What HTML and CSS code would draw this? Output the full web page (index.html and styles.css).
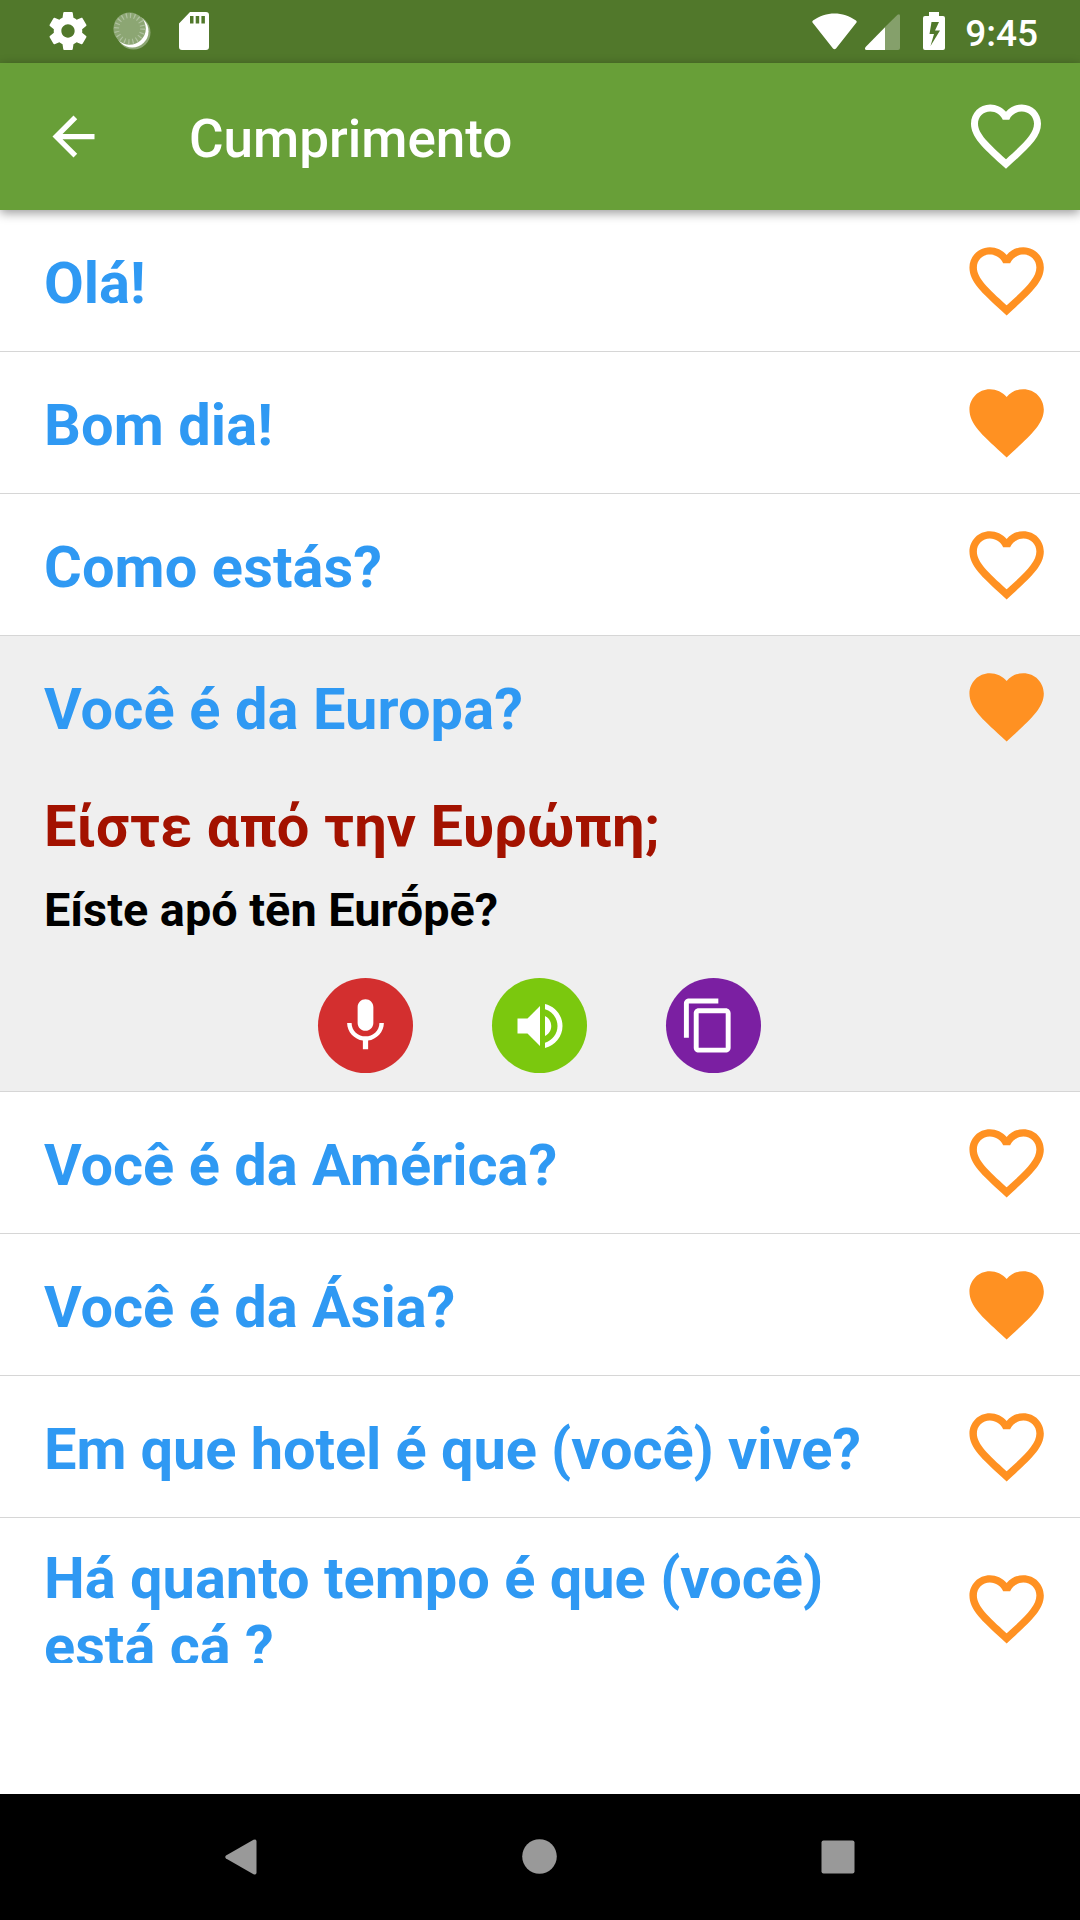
FILE: index.html
```html
<!DOCTYPE html>
<html lang="pt">
<head>
<meta charset="utf-8">
<title>Cumprimento</title>
<link rel="stylesheet" href="styles.css">
</head>
<body>
<svg class="defs" width="0" height="0">
  <symbol id="heart" viewBox="0 0 24 24"><path d="M12 21.35l-1.45-1.32C5.4 15.36 2 12.28 2 8.5 2 5.42 4.42 3 7.5 3c1.74 0 3.41.81 4.5 2.09C13.09 3.81 14.76 3 16.5 3 19.58 3 22 5.42 22 8.5c0 3.78-3.4 6.86-8.55 11.54L12 21.35z"/></symbol>
  <symbol id="heart-line" viewBox="0 0 24 24"><path d="M16.5 3c-1.74 0-3.41.81-4.5 2.09C10.91 3.81 9.24 3 7.5 3 4.42 3 2 5.42 2 8.5c0 3.78 3.4 6.86 8.55 11.54L12 21.35l1.45-1.32C18.6 15.36 22 12.28 22 8.5 22 5.42 19.58 3 16.5 3zM12.1 18.55l-.1.1-.1-.1C7.14 14.24 4 11.39 4 8.5 4 6.5 5.5 5 7.5 5c1.54 0 3.04.99 3.57 2.36h1.87C13.46 5.99 14.96 5 16.5 5c2 0 3.5 1.5 3.5 3.5 0 2.89-3.14 5.74-7.9 10.05z"/></symbol>
</svg>
<div class="screen">
  <div class="status">
    <div class="notifications">
      <svg width="38" height="38" viewBox="2.2 2 19.6 20"><path d="M19.43 12.98c.04-.32.07-.64.07-.98s-.03-.66-.07-.98l2.11-1.65c.19-.15.24-.42.12-.64l-2-3.46c-.12-.22-.39-.3-.61-.22l-2.49 1c-.52-.4-1.08-.73-1.69-.98l-.38-2.65C14.46 2.18 14.25 2 14 2h-4c-.25 0-.46.18-.49.42l-.38 2.65c-.61.25-1.17.59-1.69.98l-2.49-1c-.23-.09-.49 0-.61.22l-2 3.46c-.13.22-.07.49.12.64l2.11 1.65c-.04.32-.07.65-.07.98s.03.66.07.98l-2.11 1.65c-.19.15-.24.42-.12.64l2 3.46c.12.22.39.3.61.22l2.49-1c.52.4 1.08.73 1.69.98l.38 2.65c.03.24.24.42.49.42h4c.25 0 .46-.18.49-.42l.38-2.65c.61-.25 1.17-.59 1.69-.98l2.49 1c.23.09.49 0 .61-.22l2-3.46c.12-.22.07-.49-.12-.64l-2.11-1.65zM12 15.5c-1.93 0-3.5-1.57-3.5-3.5s1.57-3.5 3.5-3.5 3.5 1.57 3.5 3.5-1.57 3.5-3.5 3.5z"/></svg>
      <svg class="spinner" width="38" height="38" viewBox="0 0 38 38">
        <circle class="halo" cx="20.5" cy="20.5" r="17"/>
        <circle class="crescent" cx="19.2" cy="19.2" r="16.3"/>
        <circle class="disc" cx="16.6" cy="16.6" r="16.2"/>
        <circle class="ticks" cx="16.6" cy="16.6" r="13"/>
      </svg>
      <svg width="30" height="38" viewBox="0 0 30 38"><path fill-rule="evenodd" d="M11 0H27a3 3 0 0 1 3 3V35a3 3 0 0 1-3 3H3a3 3 0 0 1-3-3V11.5ZM11 4v7.5h3.5V4ZM16.700 4v7.500h3.500V4ZM22.400 4v7.500h3.500V4Z"/></svg>
    </div>
    <div class="system">
      <svg width="45" height="37" viewBox="0 0 45 37"><path d="M.7 9.800Q-.3 8.600 1 7.500C14-2 31-2 44 7.500Q45.300 8.600 44.300 9.800L24 35.500Q22.500 37 21 35.500Z"/></svg>
      <svg class="signal" width="35" height="36" viewBox="0 0 35 36"><path class="dim" d="M20 13 32.500.8Q35-.8 35 2V34Q35 36 33 36H20Z"/><path d="M20 13.200V36H1.500Q-1 35.500.6 33Z"/></svg>
      <svg class="battery" width="22" height="38" viewBox="0 0 22 38"><path fill-rule="evenodd" d="M6 0H16V4H20Q22 4 22 6V36Q22 38 20 38H2Q0 38 0 36V6Q0 4 2 4H6ZM8.500 10 6.500 22H11L7.500 34 17 18.500H12L16 10Z"/></svg>
      <span class="clock">9:45</span>
    </div>
  </div>
  <header class="appbar">
    <svg width="63" height="63" viewBox="0 0 24 24"><path d="M20 11H7.830l5.590-5.590L12 4l-8 8 8 8 1.410-1.410L7.830 13H20v-2z"/></svg>
    <h1>Cumprimento</h1>
    <svg class="fav" width="84" height="84"><use href="#heart-line"/></svg>
  </header>
  <main class="phrases">
    <div class="row"><span class="phrase">Olá!</span><svg class="heart"><use href="#heart-line"/></svg></div>
    <div class="row"><span class="phrase wide">Bom dia!</span><svg class="heart"><use href="#heart"/></svg></div>
    <div class="row"><span class="phrase wide">Como estás?</span><svg class="heart"><use href="#heart-line"/></svg></div>
    <section class="open">
      <div class="row"><span class="phrase wide">Você é da Europa?</span><svg class="heart"><use href="#heart"/></svg></div>
      <p class="translation wide">Είστε από την Ευρώπη;</p>
      <p class="romanized">Eíste apó tēn Eurṓpē?</p>
      <div class="actions">
        <span class="action mic"><svg width="63" height="63" viewBox="0 0 24 24"><path d="M12 14c1.660 0 2.990-1.340 2.990-3L15 5c0-1.660-1.340-3-3-3S9 3.340 9 5v6c0 1.660 1.340 3 3 3zm5.300-3c0 3-2.540 5.100-5.300 5.100S6.700 14 6.700 11H5c0 3.410 2.720 6.230 6 6.720V21h2v-3.280c3.280-.480 6-3.300 6-6.720h-1.700z"/></svg></span>
        <span class="action sound"><svg width="60" height="60" viewBox="0 0 24 24"><path d="M3 9v6h4l5 5V4L7 9H3zm13.500 3c0-1.770-1.020-3.290-2.500-4.030v8.050c1.480-.730 2.500-2.250 2.500-4.020zM14 3.230v2.060c2.890.860 5 3.540 5 6.710s-2.110 5.850-5 6.710v2.060c4.010-.910 7-4.490 7-8.770s-2.990-7.860-7-8.770z"/></svg></span>
        <span class="action copy"><svg width="59" height="59" viewBox="0 0 24 24"><path d="M16 1H4c-1.100 0-2 .900-2 2v14h2V3h12V1zm3 4H8c-1.100 0-2 .900-2 2v14c0 1.100.900 2 2 2h11c1.100 0 2-.900 2-2V7c0-1.100-.900-2-2-2zm0 16H8V7h11v14z"/></svg></span>
      </div>
    </section>
    <div class="row"><span class="phrase">Você é da América?</span><svg class="heart"><use href="#heart-line"/></svg></div>
    <div class="row"><span class="phrase">Você é da Ásia?</span><svg class="heart"><use href="#heart"/></svg></div>
    <div class="row"><span class="phrase snug">Em que hotel é que (você) vive?</span><svg class="heart"><use href="#heart-line"/></svg></div>
    <div class="row tall"><span class="phrase">Há quanto tempo é que (você) está cá ?</span><svg class="heart"><use href="#heart-line"/></svg></div>
  </main>
  <nav class="navbar">
    <svg width="32" height="36" viewBox="0 0 32 36"><path d="M1 16.500 28.500.8Q31.500-.5 31.500 2.500V33.500Q31.500 36.500 28.500 35.200L1 19.500Q-.5 18 1 16.500Z"/></svg>
    <svg width="35" height="35" viewBox="0 0 35 35"><circle cx="17.500" cy="17.500" r="17.300"/></svg>
    <svg width="34" height="34" viewBox="0 0 34 34"><rect x=".500" y=".500" width="33" height="33" rx="2"/></svg>
  </nav>
</div>
</body>
</html>
```
FILE: styles.css
```css
* { box-sizing: border-box; }

body {
  margin: 0;
  background: #fff;
  font-family: Roboto, "Noto Sans", sans-serif;
}

svg { display: block; flex: none; }
.defs { position: absolute; }

.screen {
  display: flex;
  flex-direction: column;
  width: 1080px;
  height: 1920px;
  overflow: hidden;
}

.status {
  display: flex;
  flex: none;
  justify-content: space-between;
  height: 63px;
  padding: 0 42px 0 49px;
  background: #51782b;
  color: #fff;
  fill: #fff;
}

.notifications {
  display: flex;
  gap: 29px;
  padding-top: 12px;
}
.notifications svg:first-child { margin-right: -3px; }
.spinner { margin-right: -1px; }
.spinner .halo { opacity: .35; }
.spinner .disc { fill: #8ca673; }
.spinner .ticks {
  fill: none;
  stroke: #b0c2a0;
  stroke-width: 5;
  stroke-dasharray: 1.200 2.884;
}

.system {
  display: flex;
  align-items: flex-start;
  padding-top: 13px;
}
.signal { margin: 1px 0 0 8px; }
.signal .dim { opacity: .3; }
.battery { margin: -1px 0 0 23px; }
.clock {
  margin: -1px 0 0 20px;
  font-size: 37px;
  font-weight: 500;
  line-height: 44px;
}

.appbar {
  display: flex;
  flex: none;
  align-items: center;
  height: 147px;
  padding: 0 32px 0 42px;
  background: #689f38;
  color: #fff;
  fill: #fff;
  box-shadow: 0 3px 10px rgba(0, 0, 0, .4);
  z-index: 1;
}
.appbar h1 {
  flex: 1;
  margin: 4px 0 0 84px;
  font-size: 53px;
  font-weight: 500;
  line-height: 62px;
}
.fav { margin-top: -2px; }

.phrases {
  flex: none;
  height: 1453px;
  overflow: hidden;
}

.row {
  display: flex;
  align-items: center;
  justify-content: space-between;
  height: 142px;
  padding: 0 29px 0 44px;
  border-bottom: 1px solid #d6d6d6;
}
.row.tall { height: 182px; }

.phrase {
  width: 860px;
  padding-top: 4px;
  color: #2f99f3;
  font-size: 57.750px;
  font-weight: 700;
  line-height: 68px;
}
.tall .phrase { padding-top: 6px; }
.wide { letter-spacing: .100px; }
.snug { letter-spacing: -.080px; }

.heart {
  width: 89.250px;
  height: 89.250px;
  fill: #ff9122;
}

.open {
  height: 456px;
  border-bottom: 1px solid #d6d6d6;
  background: #efefef;
}
.open .row { border-bottom-color: transparent; }
.open p {
  margin: 0 44px;
  font-weight: 700;
}
.open .translation {
  margin-top: 14px;
  color: #a31200;
  font-size: 57.750px;
  line-height: 68px;
}
.open .romanized {
  margin-top: 22px;
  color: #000;
  font-size: 46.800px;
  line-height: 56px;
}

.actions {
  display: flex;
  justify-content: center;
  gap: 79px;
  margin: 40px 1px 0 0;
}
.action {
  display: flex;
  align-items: center;
  justify-content: center;
  width: 95px;
  height: 95px;
  border-radius: 50%;
  fill: #fff;
}
.mic { background: #d32f2f; }
.sound { background: #7bc80e; }
.copy { padding-right: 10px; background: #7b1fa2; }

.navbar {
  display: flex;
  align-items: center;
  justify-content: space-between;
  height: 126px;
  margin-top: auto;
  padding: 0 225px 1px;
  background: #000;
  fill: #999;
}
```
